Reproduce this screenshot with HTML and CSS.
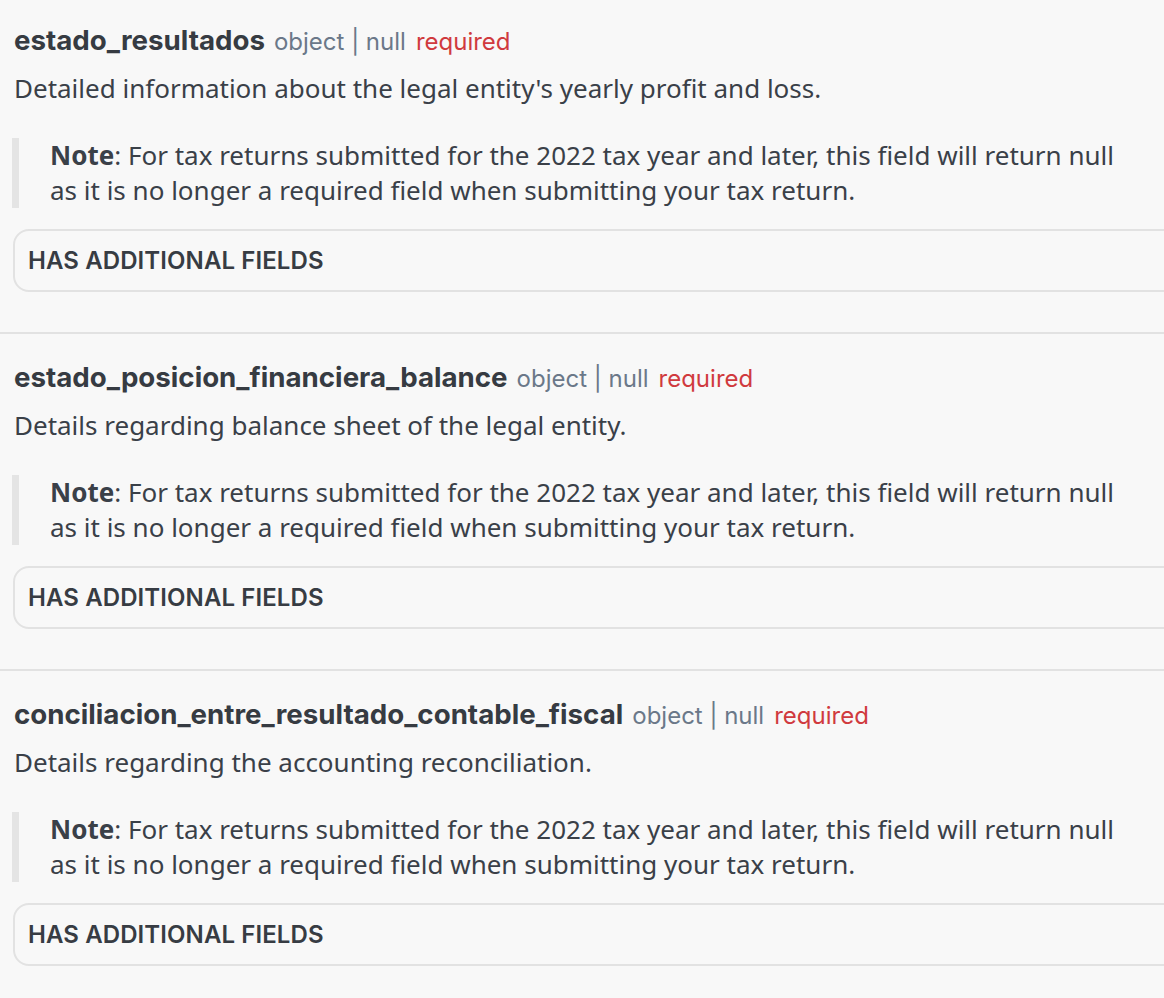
FILE: index.html
```html
<!DOCTYPE html>
<html>
<head>
<meta charset="utf-8">
<link rel="stylesheet" href="styles.css">
</head>
<body>
<div class="page">
  <section class="field">
    <div class="field-head">
      <span class="field-name">estado_resultados</span>
      <span class="field-type">object | null</span>
      <span class="field-req">required</span>
    </div>
    <p class="field-desc">Detailed information about the legal entity's yearly profit and loss.</p>
    <blockquote class="note"><strong>Note</strong>: For tax returns submitted for the 2022 tax year and later, this field will return null as it is no longer a required field when submitting your tax return.</blockquote>
    <div class="extra">HAS ADDITIONAL FIELDS</div>
  </section>
  <section class="field">
    <div class="field-head">
      <span class="field-name">estado_posicion_financiera_balance</span>
      <span class="field-type">object | null</span>
      <span class="field-req">required</span>
    </div>
    <p class="field-desc">Details regarding balance sheet of the legal entity.</p>
    <blockquote class="note"><strong>Note</strong>: For tax returns submitted for the 2022 tax year and later, this field will return null as it is no longer a required field when submitting your tax return.</blockquote>
    <div class="extra">HAS ADDITIONAL FIELDS</div>
  </section>
  <section class="field">
    <div class="field-head">
      <span class="field-name">conciliacion_entre_resultado_contable_fiscal</span>
      <span class="field-type">object | null</span>
      <span class="field-req">required</span>
    </div>
    <p class="field-desc">Details regarding the accounting reconciliation.</p>
    <blockquote class="note"><strong>Note</strong>: For tax returns submitted for the 2022 tax year and later, this field will return null as it is no longer a required field when submitting your tax return.</blockquote>
    <div class="extra">HAS ADDITIONAL FIELDS</div>
  </section>
</div>
</body>
</html>
```
FILE: styles.css
```css
html, body {
  margin: 0;
  padding: 0;
  background: #f8f8f8;
  overflow: hidden;
}
.page {
  width: 1200px;
  margin-top: -3px;
}
.field {
  padding: 27px 0 40px 14px;
  border-bottom: 2px solid #e2e2e2;
}
.field-head {
  display: flex;
  align-items: baseline;
  height: 32px;
  line-height: 32px;
}
.field-name {
  font-family: Inter, sans-serif;
  font-weight: 700;
  font-size: 27.7px;
  color: #363b42;
  margin-right: 9px;
}
.field-type {
  font-family: Inter, sans-serif;
  font-size: 24px;
  color: #6b7889;
  margin-right: 10px;
}
.field-req {
  font-family: Inter, sans-serif;
  font-size: 24px;
  color: #d03a3e;
}
.field-desc {
  margin: 15px 0 0 0;
  font-family: "Noto Sans", sans-serif;
  font-size: 26px;
  line-height: 35px;
  color: #3a4048;
}
.note {
  margin: 32px 0 0 -2px;
  padding: 0 0 0 31px;
  border-left: 7px solid #e4e4e4;
  font-family: "Noto Sans", sans-serif;
  font-size: 26px;
  line-height: 35px;
  color: #3a4048;
  max-width: 1080px;
}
.note strong {
  font-weight: 700;
}
.extra {
  margin: 21px 0 0 -1px;
  border: 2px solid #e2e2e2;
  border-radius: 16px;
  padding: 0 0 0 13px;
  height: 59px;
  display: flex;
  align-items: center;
  font-family: Inter, sans-serif;
  font-weight: 600;
  font-size: 24px;
  letter-spacing: 0.1px;
  color: #373c43;
}
```
